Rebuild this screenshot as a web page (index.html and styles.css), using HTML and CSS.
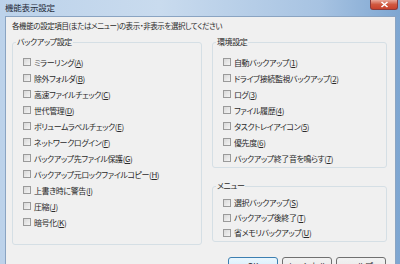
FILE: index.html
```html
<!DOCTYPE html>
<html lang="ja">
  <head>
    <meta charset="UTF-8" />
    <title>機能表示設定</title>
    <link rel="stylesheet" href="styles.css">
  </head>
  <body>
    <div class="window">
      <!-- barra de titulo estilo Aero -->
      <div class="titlebar">
        <span class="title">機能表示設定</span>
        <span class="close">
          <svg width="9" height="7" viewBox="0 0 9 7"><path d="M1.5 1 L7.5 6 M7.5 1 L1.5 6" stroke="#fff" stroke-width="1.6"/></svg>
        </span>
      </div>

      <div class="client">
        <p class="intro">各機能の設定項目(またはメニュー)の表示・非表示を選択してください</p>

        <div class="groups">
          <fieldset class="group group-backup">
            <legend>バックアップ設定</legend>
            <label class="check"><span class="box"></span>ミラーリング(<u>A</u>)</label>
            <label class="check"><span class="box"></span>除外フォルダ(<u>B</u>)</label>
            <label class="check"><span class="box"></span>高速ファイルチェック(<u>C</u>)</label>
            <label class="check"><span class="box"></span>世代管理(<u>D</u>)</label>
            <label class="check"><span class="box"></span>ボリュームラベルチェック(<u>E</u>)</label>
            <label class="check"><span class="box"></span>ネットワークログイン(<u>F</u>)</label>
            <label class="check"><span class="box"></span>バックアップ先ファイル保護(<u>G</u>)</label>
            <label class="check"><span class="box"></span>バックアップ元ロックファイルコピー(<u>H</u>)</label>
            <label class="check"><span class="box"></span>上書き時に警告(<u>I</u>)</label>
            <label class="check"><span class="box"></span>圧縮(<u>J</u>)</label>
            <label class="check"><span class="box"></span>暗号化(<u>K</u>)</label>
          </fieldset>

          <div class="right-col">
            <fieldset class="group group-env">
              <legend>環境設定</legend>
              <label class="check"><span class="box"></span>自動バックアップ(<u>1</u>)</label>
              <label class="check"><span class="box"></span>ドライブ接続監視バックアップ(<u>2</u>)</label>
              <label class="check"><span class="box"></span>ログ(<u>3</u>)</label>
              <label class="check"><span class="box"></span>ファイル履歴(<u>4</u>)</label>
              <label class="check"><span class="box"></span>タスクトレイアイコン(<u>5</u>)</label>
              <label class="check"><span class="box"></span>優先度(<u>6</u>)</label>
              <label class="check"><span class="box"></span>バックアップ終了音を鳴らす(<u>7</u>)</label>
            </fieldset>

            <fieldset class="group group-menu">
              <legend>メニュー</legend>
              <label class="check"><span class="box"></span>選択バックアップ(<u>S</u>)</label>
              <label class="check"><span class="box"></span>バックアップ後終了(<u>T</u>)</label>
              <label class="check"><span class="box"></span>省メモリバックアップ(<u>U</u>)</label>
            </fieldset>
          </div>
        </div>

        <div class="buttons">
          <button class="btn btn-default">OK</button>
          <button class="btn">キャンセル</button>
          <button class="btn">ヘルプ</button>
        </div>
      </div>
    </div>
  </body>
</html>
```

FILE: styles.css
```css
/* reseteo */
html {
  box-sizing: border-box;
  font-family: "Noto Sans CJK JP", "Noto Sans", sans-serif;
  font-size: 8px;
}

*,
*:before,
*:after {
  box-sizing: inherit;
}

body {
  margin: 0;
  width: 400px;
  height: 264px;
  overflow: hidden;
  color: #2a2a2a;
}

/* marco de la ventana */
.window {
  width: 400px;
  height: 264px;
  display: flex;
  flex-direction: column;
  padding: 0 4px 0 5px;
  background: linear-gradient(90deg, #bcd2ea 0%, #c9dbee 40%, #a7c3e2 80%, #7ea6d1 100%);
}

.titlebar {
  height: 16px;
  flex-shrink: 0;
  display: flex;
  justify-content: space-between;
  align-items: flex-start;
}

.title {
  padding: 2px 0 0 0;
  line-height: 11px;
  font-size: 8.5px;
  letter-spacing: -0.2px;
  color: #1e2a38;
}

.close {
  width: 28px;
  height: 10px;
  margin-right: -2px;
  display: flex;
  justify-content: center;
  align-items: center;
  border: 1px solid #8a3b3b;
  border-top: 0;
  border-radius: 0 0 3px 3px;
  background: linear-gradient(#e9a99b, #d0583f 50%, #c8412c);
}

.client {
  flex-grow: 1;
  display: flex;
  flex-direction: column;
  padding: 0 5px 0 6px;
  background: #f0f0f0;
  border: 1px solid #8aa4c2;
  border-bottom: 0;
}

.intro {
  margin: 3px 0 0 0;
  line-height: 12px;
  font-size: 7.5px;
  letter-spacing: -0.4px;
  font-feature-settings: "palt";
}

.groups {
  display: flex;
  gap: 10px;
  margin-top: 4px;
}

.right-col {
  flex-grow: 1;
  display: flex;
  flex-direction: column;
  gap: 12px;
  margin-right: 3px;
}

/* cuadros de grupo */
.group {
  margin: 0;
  padding: 6px 0 0 10px;
  border: 1px solid #d5dfe5;
  border-radius: 3px;
  display: flex;
  flex-direction: column;
}

.group legend {
  padding: 0 1px;
  margin-left: -7px;
  line-height: 12px;
  letter-spacing: -0.4px;
  font-feature-settings: "palt";
}

.group-backup {
  width: 190px;
  height: 209px;
}

.group-env {
  height: 132px;
}

.group-menu {
  height: 62px;
  padding-top: 3px;
}

.group-menu .check {
  height: 15px;
}

.check {
  height: 16px;
  display: flex;
  align-items: center;
  letter-spacing: -0.4px;
  font-feature-settings: "palt";
  white-space: nowrap;
}

.check u {
  text-underline-offset: 1px;
}

.box {
  width: 8px;
  height: 8px;
  margin-right: 3px;
  flex-shrink: 0;
  border: 1px solid #9a9a9a;
  background: linear-gradient(135deg, #d8d8d8, #f4f4f4);
}

/* botones */
.buttons {
  display: flex;
  justify-content: flex-end;
  gap: 4px;
  margin-top: 12px;
  padding-right: 4px;
}

.btn {
  width: 50px;
  height: 22px;
  padding: 0;
  font-family: inherit;
  font-size: 8px;
  color: #1e1e1e;
  border: 1px solid #707070;
  border-radius: 3px;
  background: linear-gradient(#f2f2f2 0%, #ebebeb 45%, #dddddd 50%, #cfcfcf 100%);
  display: flex;
  justify-content: center;
  padding-top: 2px;
}

.btn-default {
  border-color: #3c7fb1;
  background: linear-gradient(#eaf6fd 0%, #d9f0fc 45%, #bee6fd 50%, #a7d9f5 100%);
}
```
